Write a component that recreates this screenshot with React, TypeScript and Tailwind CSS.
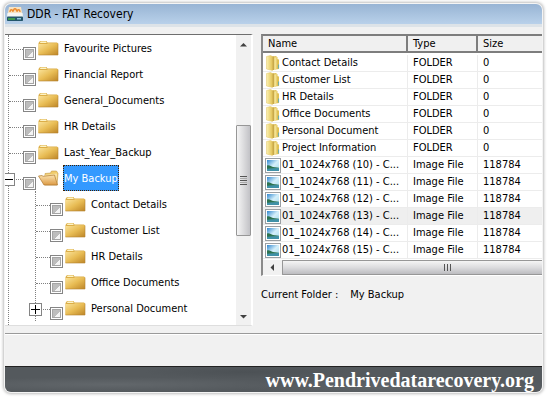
import React from 'react';
import { clsx } from 'clsx';

interface TreeNode {
  name: string;
  open?: boolean;
  expandable?: boolean;
  children?: TreeNode[];
}

interface FileRow {
  name: string;
  type: 'FOLDER' | 'Image File';
  size: string;
  active?: boolean;
}

const tree: TreeNode[] = [
  { name: 'Favourite Pictures' },
  { name: 'Financial Report' },
  { name: 'General_Documents' },
  { name: 'HR Details' },
  { name: 'Last_Year_Backup' },
  {
    name: 'My Backup',
    open: true,
    expandable: true,
    children: [
      { name: 'Contact Details' },
      { name: 'Customer List' },
      { name: 'HR Details' },
      { name: 'Office Documents' },
      { name: 'Personal Document', expandable: true },
    ],
  },
];

const files: FileRow[] = [
  { name: 'Contact Details', type: 'FOLDER', size: '0' },
  { name: 'Customer List', type: 'FOLDER', size: '0' },
  { name: 'HR Details', type: 'FOLDER', size: '0' },
  { name: 'Office Documents', type: 'FOLDER', size: '0' },
  { name: 'Personal Document', type: 'FOLDER', size: '0' },
  { name: 'Project Information', type: 'FOLDER', size: '0' },
  { name: '01_1024x768 (10) - C...', type: 'Image File', size: '118784' },
  { name: '01_1024x768 (11) - C...', type: 'Image File', size: '118784' },
  { name: '01_1024x768 (12) - C...', type: 'Image File', size: '118784' },
  { name: '01_1024x768 (13) - C...', type: 'Image File', size: '118784', active: true },
  { name: '01_1024x768 (14) - C...', type: 'Image File', size: '118784' },
  { name: '01_1024x768 (15) - C...', type: 'Image File', size: '118784' },
];

/* Shared gradients */
const Gradients = () => (
  <svg width="0" height="0" className="absolute" aria-hidden="true">
    <defs>
      <linearGradient id="gold" x1="0" y1="0" x2="1" y2="1">
        <stop offset="0" stopColor="#fbe49c" />
        <stop offset="0.5" stopColor="#e8bc54" />
        <stop offset="1" stopColor="#bd8527" />
      </linearGradient>
      <linearGradient id="goldOpen" x1="0" y1="0" x2="0" y2="1">
        <stop offset="0" stopColor="#fbe3b0" />
        <stop offset="1" stopColor="#dc9a45" />
      </linearGradient>
      <linearGradient id="leaf" x1="0" y1="0" x2="1" y2="0">
        <stop offset="0" stopColor="#fbf1b0" />
        <stop offset="1" stopColor="#e2c255" />
      </linearGradient>
      <linearGradient id="sky" x1="0" y1="0" x2="1" y2="1">
        <stop offset="0" stopColor="#2f86cf" />
        <stop offset="0.5" stopColor="#d4effa" />
        <stop offset="1" stopColor="#a9dcf0" />
      </linearGradient>
    </defs>
  </svg>
);

const FolderIcon = ({ open }: { open?: boolean }) =>
  open ? (
    <svg width="21" height="16" viewBox="0 0 21 16">
      <path d="M7 3.500 12.500 3l1-2h5l1 1.500.5 1-1 11.500H7z" fill="#f0cc6c" stroke="#b98a35" strokeWidth=".5" />
      <path d="M6 5 19 3.500 18.500 13H8z" fill="#f9e3a4" />
      <path d="M.5 6 4 5.500l1 .8L16.500 5l3 10H6z" fill="url(#goldOpen)" stroke="#b07a30" strokeWidth=".7" />
    </svg>
  ) : (
    <svg width="21" height="16" viewBox="0 0 21 16">
      <path d="M.5 3 2 1h6.500l1 1.500H19l1 1V15H.5z" fill="#dcae48" />
      <path d="M2.500 1.500H8l.7 1.500H2z" fill="#fdf3c4" />
      <path d="M.5 4H9l1-.8h10V15H.5z" fill="url(#gold)" />
      <path d="M.5 15H20V3.500" fill="none" stroke="#b58530" strokeWidth=".6" />
    </svg>
  );

const ListFolderIcon = () => (
  <svg width="14" height="16" viewBox="0 0 14 16">
    <path d="M6 1.500 10.500 1v3L13 4.500V14l-7 1z" fill="#dfc053" />
    <path d="M8.500 2.500l3-.5V13.500l-3 1z" fill="url(#leaf)" />
    <path d="M.5 1.500 4.500.5l2 1V15.500L.5 14z" fill="url(#leaf)" stroke="#e0c564" strokeWidth=".5" />
    <path d="M7.300 1.500v13.500" stroke="#c9a94a" strokeWidth="1.400" />
    <path d="M12.600 9.500v4" stroke="#5aa9b5" strokeWidth=".9" />
  </svg>
);

const ImageIcon = () => (
  <svg width="16" height="15" viewBox="0 0 16 15">
    <rect x=".5" y=".5" width="15" height="14" fill="#fff" stroke="#9a9fa3" />
    <rect x="2" y="2" width="12" height="11" fill="url(#sky)" />
    <path d="M2 7.500c2-1 4 .5 6 1.500l6 .8v1L2 11z" fill="#2d7350" />
    <path d="M2 10.800 14 10v3H2z" fill="#3f91a8" />
  </svg>
);

const AppIcon = () => (
  <svg width="16" height="16" viewBox="0 0 16 16">
    <path d="M2 1h12l1.500 8H.5z" fill="#f6e3c4" />
    <path d="M3 6c0-3 3-3 3 0M6.500 5c0-3 3-3 3 0M10 6c0-3 3-3 3 0" fill="none" stroke="#ec8a2c" strokeWidth="1.300" />
    <path d="M.5 7h15l.5 4H0z" fill="#f5f6f4" />
    <rect x="0" y="10.500" width="16" height="4.500" rx=".8" fill="#24566b" />
    <path d="M1 12h7v2H1z" fill="#3f9a4c" />
    <path d="M10 12h4v1.500h-4z" fill="#8fc4dd" />
  </svg>
);

const Tree: React.FC<{ nodes: TreeNode[]; path?: string }> = ({ nodes, path = 'root' }) => (
  <>
    {nodes.map((node) => {
      const id = `${path}-${node.name}`.replace(/ /g, '_');
      return (
        <li key={id}>
          <div className="relative flex h-[26px] items-start">
            {node.expandable && (
              <button
                type="button"
                aria-label={`Toggle ${node.name}`}
                className="absolute top-2 -left-[7px] flex size-[13px] items-center justify-center border border-[#848484] bg-white"
              >
                <svg width="9" height="9" viewBox="0 0 9 9" stroke="#000">
                  <path d={node.open ? 'M0 4.500h9' : 'M0 4.500h9M4.500 0v9'} />
                </svg>
              </button>
            )}
            <span className="mt-[14px] w-[14px] shrink-0 border-t border-dotted border-[#808080]" />
            <input
              id={id}
              type="checkbox"
              className="mt-3 size-[13px] shrink-0 appearance-none border border-[#858585] bg-[linear-gradient(135deg,#bdbdbd_58%,#f4f4f4_58%)] shadow-[inset_0_0_0_1px_#fff,inset_0_0_0_2px_#a5a5a5]"
            />
            <span className="mt-[5px] ml-[2px] shrink-0">
              <FolderIcon open={node.open} />
            </span>
            <label
              htmlFor={id}
              className={clsx(
                'ml-1 flex h-[26px] items-center border border-dotted pt-[2px] whitespace-nowrap',
                node.open ? 'border-[#402000] bg-[#3399ff] text-white' : 'border-transparent'
              )}
            >
              {node.name}
            </label>
          </div>
          {node.children && (
            <ul className="ml-[26px] border-l border-dotted border-[#808080]">
              <Tree nodes={node.children} path={id} />
            </ul>
          )}
        </li>
      );
    })}
  </>
);

const Arrow = ({ d }: { d: string }) => (
  <svg width="7" height="7" viewBox="0 0 7 7" fill="#404040">
    <path d={d} />
  </svg>
);

const VerticalScrollbar = () => (
  <div className="flex w-[15px] shrink-0 flex-col items-center bg-[#f1f1f1]">
    <button type="button" aria-label="Scroll up" className="flex h-[18px] w-full items-center justify-center">
      <Arrow d="M0 5.500 3.500 2 7 5.500z" />
    </button>
    <div className="mt-[72px] flex h-[111px] w-full items-center justify-center rounded-[1px] border border-[#979797] bg-linear-to-r from-[#f5f5f5] via-[#dcdcde] to-[#c2c2c6]">
      <div className="flex flex-col gap-px">
        <span className="h-px w-[7px] bg-[#555]" />
        <span className="h-px w-[7px] bg-[#aaa]" />
        <span className="h-px w-[7px] bg-[#555]" />
        <span className="h-px w-[7px] bg-[#aaa]" />
        <span className="h-px w-[7px] bg-[#555]" />
      </div>
    </div>
    <button type="button" aria-label="Scroll down" className="mt-auto flex h-[18px] w-full items-center justify-center">
      <Arrow d="M0 2 3.500 5.500 7 2z" />
    </button>
  </div>
);

const HorizontalScrollbar = () => (
  <div className="mt-px flex h-[15px] bg-[#f1f1f1]">
    <button type="button" aria-label="Scroll left" className="flex w-[19px] items-center justify-center">
      <Arrow d="M5 0 1.500 3.500 5 7z" />
    </button>
    <div className="flex flex-1 items-center justify-center rounded-l-[1px] border border-r-0 border-[#979797] bg-linear-to-b from-[#f5f5f5] via-[#dcdcde] to-[#bcbcc0] pl-[70px]">
      <div className="flex gap-[2px]">
        <span className="h-[7px] w-px bg-[#555]" />
        <span className="h-[7px] w-px bg-[#555]" />
        <span className="h-[7px] w-px bg-[#555]" />
      </div>
    </div>
  </div>
);

const FileTable = () => (
  <table className="w-full table-fixed border-separate border-spacing-0 text-left">
    <colgroup>
      <col className="w-[145px]" />
      <col className="w-[70px]" />
      <col />
    </colgroup>
    <thead className="bg-[#f0f0f0]">
      <tr className="h-[17px]">
        <th className="border-r-2 border-b-2 border-[#7d7d7d] py-0 pl-[5px] font-normal">Name</th>
        <th className="border-r-2 border-b-2 border-[#7d7d7d] py-0 pl-[5px] font-normal">Type</th>
        <th className="border-b-2 border-[#7d7d7d] py-0 pl-[5px] font-normal">Size</th>
      </tr>
    </thead>
    <tbody className="before:block before:h-[2px]">
      {files.map((file) => (
        <tr key={file.name} className={clsx('h-[17px]', file.active && 'bg-[#efefef]')}>
          <td className="border-r border-b border-[#ececec] p-0">
            <div className="flex h-4 items-center whitespace-nowrap">
              <span className="flex w-[19px] shrink-0 justify-center">
                {file.type === 'FOLDER' ? <ListFolderIcon /> : <ImageIcon />}
              </span>
              {file.name}
            </div>
          </td>
          <td className="border-r border-b border-[#ececec] py-0 pl-[5px]">{file.type}</td>
          <td className="border-b border-[#ececec] py-0 pl-[5px]">{file.size}</td>
        </tr>
      ))}
    </tbody>
  </table>
);

const App: React.FC = () => (
  <div className="bg-white pt-1 pr-2 pb-2 pl-[5px] font-['DejaVu_Sans_Condensed','Noto_Sans',sans-serif] text-[11px] leading-[14px] text-black">
    <Gradients />
    <div className="overflow-hidden rounded-md bg-[#f1f1f1] shadow-[0_0_0_1px_#f4f4f4,0_0_3px_2px_#bdbdbd]">
      <header className="flex h-5 items-center gap-1 bg-linear-to-b from-[#98b4d4] to-[#b9d1ea] pl-[2px] text-xs">
        <AppIcon />
        <h1>DDR - FAT Recovery</h1>
      </header>
      <div className="h-[3px] bg-[#dde3e8]" />

      <main className="flex items-start gap-2 pt-[7px]">
        <section className="flex w-[248px] shrink-0 border-t border-r-2 border-b border-t-[#6e6e6e] border-r-white border-b-[#dedede] bg-white">
          <ul className="ml-[3px] flex-1 border-l border-dotted border-[#808080] pb-1">
            <Tree nodes={tree} />
          </ul>
          <VerticalScrollbar />
        </section>

        <section className="min-w-0 flex-1">
          <div className="border-t-2 border-b border-l-2 border-t-[#7d7d7d] border-b-white border-l-[#8a8a8a] bg-white">
            <FileTable />
            <HorizontalScrollbar />
          </div>
          <p className="mt-3 flex gap-3">
            <span>Current Folder :</span>
            <span>My Backup</span>
          </p>
        </section>
      </main>

      <div className="mt-[7px] h-[33px] border-t border-[#9a9a9a] shadow-[inset_0_1px_0_#fff]" />
      <footer className="flex h-[26px] items-center justify-end border-t border-[#222] bg-[#54595d] bg-[radial-gradient(ellipse_at_20%_70%,#62676b_0%,transparent_30%),radial-gradient(ellipse_at_45%_20%,#4c5155_0%,transparent_25%),radial-gradient(ellipse_at_75%_80%,#5f6468_0%,transparent_30%)] pr-2 font-['Liberation_Serif',serif] text-xl font-bold text-white">
        <a href="#">www.Pendrivedatarecovery.org</a>
      </footer>
    </div>
  </div>
);

export default App;
